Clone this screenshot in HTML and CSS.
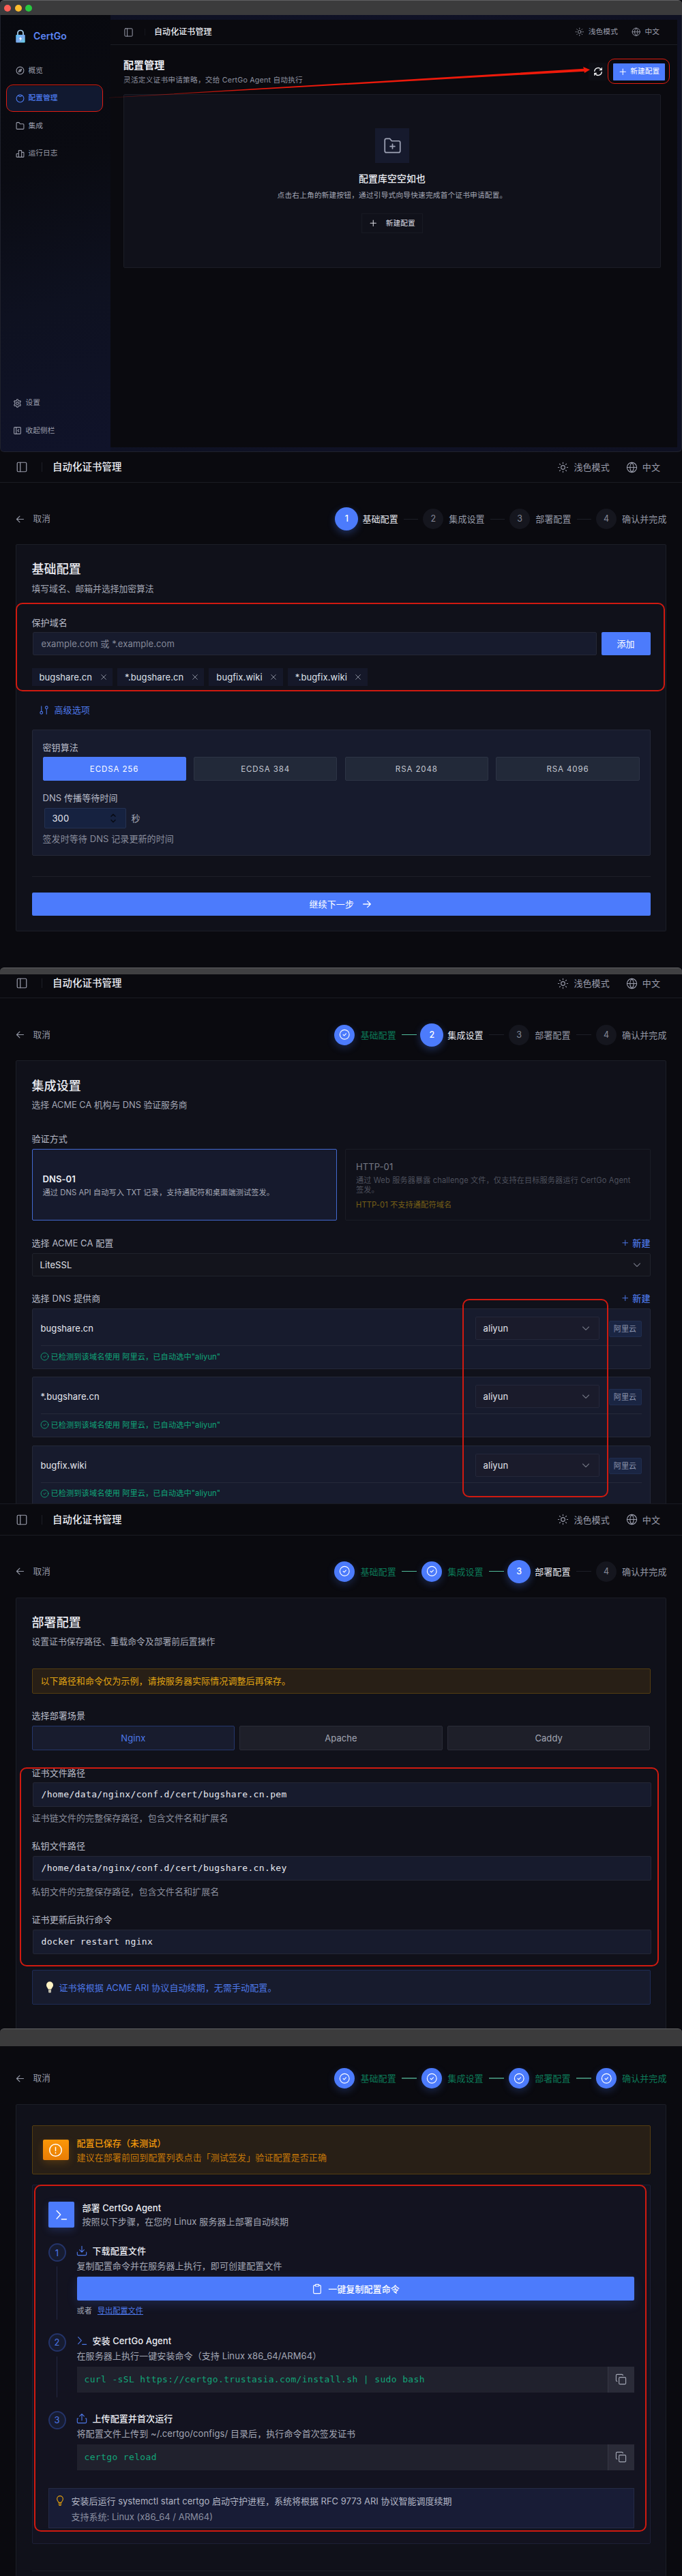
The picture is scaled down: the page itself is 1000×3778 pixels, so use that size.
FILE: index.html
```html
<!DOCTYPE html>
<html lang="zh-CN">
<head>
<meta charset="utf-8">
<title>CertGo 自动化证书管理</title>
<link rel="stylesheet" href="styles.css">
</head>
<body>
<svg class="defs" aria-hidden="true">
  <symbol id="panel" viewBox="0 0 24 24"><rect x="3" y="3" width="18" height="18" rx="2"/><path d="M9 3v18"/></symbol>
  <symbol id="collapse" viewBox="0 0 24 24"><rect x="3" y="3" width="18" height="18" rx="2"/><path d="M9 3v18M16 9l-3 3 3 3"/></symbol>
  <symbol id="sun" viewBox="0 0 24 24"><circle cx="12" cy="12" r="4"/><path d="M12 2v2M12 20v2M4.9 4.9l1.4 1.4M17.7 17.7l1.4 1.4M2 12h2M20 12h2M6.3 17.7l-1.4 1.4M19.1 4.9l-1.4 1.4"/></symbol>
  <symbol id="globe" viewBox="0 0 24 24"><circle cx="12" cy="12" r="10"/><path d="M2 12h20M12 2c-5.3 5.6-5.3 14.400 0 20M12 2c5.300 5.600 5.300 14.400 0 20"/></symbol>
  <symbol id="gauge" viewBox="0 0 24 24"><circle cx="12" cy="12" r="10"/><path d="M16 8l-2 6-6 2 2-6z"/><circle cx="12" cy="12" r="1"/></symbol>
  <symbol id="ring" viewBox="0 0 24 24"><circle cx="12" cy="12" r="10"/><path d="M6.500 4.500c3 2.500 8 2.500 11 0"/></symbol>
  <symbol id="folder" viewBox="0 0 24 24"><path d="M2 5a2 2 0 0 1 2-2h5l3 4h8a2 2 0 0 1 2 2v10a2 2 0 0 1-2 2H4a2 2 0 0 1-2-2z"/></symbol>
  <symbol id="folderplus" viewBox="0 0 24 24"><path d="M2 5a2 2 0 0 1 2-2h4.500l2.500 3h9a2 2 0 0 1 2 2v11a2 2 0 0 1-2 2H4a2 2 0 0 1-2-2zM12 10v6M9 13h6"/></symbol>
  <symbol id="bars" viewBox="0 0 24 24"><path d="M2 13a1 1 0 0 1 1-1h5v9H3a1 1 0 0 1-1-1zM8 4a1 1 0 0 1 1-1h6a1 1 0 0 1 1 1v17H8zM16 8h5a1 1 0 0 1 1 1v11a1 1 0 0 1-1 1h-5z"/></symbol>
  <symbol id="gear" viewBox="0 0 24 24"><path d="M9.700 4.300 10.500 1.500h3l.8 2.800 2.300 1.300 2.800-.7 1.600 2.600-2 2.100v4.800l2 2.100-1.600 2.600-2.800-.7-2.300 1.300-.8 2.800h-3l-.8-2.800-2.300-1.300-2.800.7L3 16.500l2-2.100V9.600L3 7.500l1.600-2.600 2.800.7z"/><circle cx="12" cy="12" r="3.500"/></symbol>
  <symbol id="refresh" viewBox="0 0 24 24"><path d="M3 11a9 9 0 0 1 15.500-5.500L21 8M21 3v5h-5M21 13a9 9 0 0 1-15.500 5.500L3 16M3 21v-5h5"/></symbol>
  <symbol id="plus" viewBox="0 0 24 24"><path d="M12 4v16M4 12h16"/></symbol>
  <symbol id="left" viewBox="0 0 24 24"><path d="M20 12H4M11 5l-7 7 7 7"/></symbol>
  <symbol id="right" viewBox="0 0 24 24"><path d="M4 12h16M13 5l7 7-7 7"/></symbol>
  <symbol id="cross" viewBox="0 0 24 24"><path d="M4 4l16 16M20 4L4 20"/></symbol>
  <symbol id="down" viewBox="0 0 24 24"><path d="M3 8l9 9 9-9"/></symbol>
  <symbol id="check" viewBox="0 0 24 24"><circle cx="12" cy="12" r="10"/><path d="M9 12.300l2.200 2 4-4.300"/></symbol>
  <symbol id="sliders" viewBox="0 0 24 24"><path d="M6 3v11M18 21V10"/><circle cx="6" cy="18" r="3"/><circle cx="18" cy="6" r="3"/></symbol>
  <symbol id="alert" viewBox="0 0 24 24"><circle cx="12" cy="12" r="10"/><path d="M12 7v6M12 16v1"/></symbol>
  <symbol id="prompt" viewBox="0 0 24 24"><path d="M4 4l7 7.500L4 19M13 20h9"/></symbol>
  <symbol id="download" viewBox="0 0 24 24"><path d="M12 2v13M7 10l5 5 5-5M2 15v5a2 2 0 0 0 2 2h16a2 2 0 0 0 2-2v-5"/></symbol>
  <symbol id="upload" viewBox="0 0 24 24"><path d="M12 16V2M7 7l5-5 5 5M4 12H2v8a2 2 0 0 0 2 2h16a2 2 0 0 0 2-2v-8h-2"/></symbol>
  <symbol id="clip" viewBox="0 0 24 24"><path d="M8 4H6a2 2 0 0 0-2 2v14a2 2 0 0 0 2 2h12a2 2 0 0 0 2-2V6a2 2 0 0 0-2-2h-2"/><rect x="8" y="2" width="8" height="4" rx="1"/></symbol>
  <symbol id="copy" viewBox="0 0 24 24"><rect x="8" y="8" width="14" height="14" rx="2"/><path d="M4 16a2 2 0 0 1-2-2V4a2 2 0 0 1 2-2h10a2 2 0 0 1 2 2"/></symbol>
  <symbol id="bulb" viewBox="0 0 24 24"><path d="M9 17c0-2-3.500-3.500-3.500-8a6.500 6.500 0 0 1 13 0c0 4.500-3.500 6-3.500 8zM9 20h6M10 23h4"/></symbol>
</svg>

<section class="window">
  <div class="titlebar lights"><i class="dot red"></i><i class="dot yellow"></i><i class="dot green"></i></div>
  <div class="shell">
    <nav class="sidebar">
      <div class="brand">
        <svg class="lock" viewBox="0 0 14 20"><defs><linearGradient id="lk" x1="0" y1="0" x2="1" y2="1"><stop offset="0" stop-color="#58c4f4"/><stop offset=".5" stop-color="#7fa8ee"/><stop offset="1" stop-color="#64d6e6"/></linearGradient></defs><path d="M3 9V5.500a4 4 0 0 1 8 0V9" fill="none" stroke="#a9d3f2" stroke-width="1.700"/><rect x=".3" y="8" width="13.400" height="11.500" rx="1" fill="url(#lk)"/><path d="M7.700 10.500 4.800 14.200h1.900L6.200 17.200 9.300 13.300H7.400z" fill="#fff"/></svg>
        <span>CertGo</span>
      </div>
      <a class="nav"><svg class="i"><use href="#gauge"/></svg>概览</a>
      <a class="nav on"><svg class="i"><use href="#ring"/></svg>配置管理</a>
      <a class="nav"><svg class="i"><use href="#folder"/></svg>集成</a>
      <a class="nav"><svg class="i"><use href="#bars"/></svg>运行日志</a>
      <div class="navfoot">
        <a class="nav"><svg class="i"><use href="#gear"/></svg>设置</a>
        <a class="nav"><svg class="i"><use href="#collapse"/></svg>收起侧栏</a>
      </div>
    </nav>
    <main class="main">
      <header class="bar small">
        <svg class="i"><use href="#panel"/></svg><i class="sep"></i><b>自动化证书管理</b>
        <span class="tool"><svg class="i"><use href="#sun"/></svg>浅色模式</span>
        <span class="tool"><svg class="i"><use href="#globe"/></svg>中文</span>
      </header>
      <div class="pagehead">
        <div><h1>配置管理</h1><p>灵活定义证书申请策略，交给 CertGo Agent 自动执行</p></div>
        <button class="refresh"><svg class="i"><use href="#refresh"/></svg></button>
        <button class="new"><svg class="i"><use href="#plus"/></svg>新建配置</button>
      </div>
      <div class="empty">
        <div class="tile"><svg class="i"><use href="#folderplus"/></svg></div>
        <h2>配置库空空如也</h2>
        <p>点击右上角的新建按钮，通过引导式向导快速完成首个证书申请配置。</p>
        <button><svg class="i"><use href="#plus"/></svg>新建配置</button>
      </div>
    </main>
  </div>
  <div class="mark mark-nav"></div>
  <div class="mark mark-new"></div>
  <svg class="arrow" viewBox="0 0 706 50"><defs><linearGradient id="ar"><stop offset="0" stop-color="#e8190c" stop-opacity=".25"/><stop offset=".3" stop-color="#e8190c"/><stop offset="1" stop-color="#f01a0a"/></linearGradient></defs><path d="M0 43 696 .8 695-2 705 2.300 697 7 696.500 4.700 0 43.600z" transform="translate(0 1)" fill="url(#ar)"/></svg>
</section>

<section class="wizard w2">
  <header class="bar">
    <svg class="i"><use href="#panel"/></svg><i class="sep"></i><b>自动化证书管理</b>
    <span class="tool"><svg class="i"><use href="#sun"/></svg>浅色模式</span>
    <span class="tool"><svg class="i"><use href="#globe"/></svg>中文</span>
  </header>
  <div class="steps">
    <span class="back"><svg class="i"><use href="#left"/></svg>取消</span>
    <span class="n cur">1</span><span class="s cur">基础配置</span><i></i>
    <span class="n">2</span><span class="s">集成设置</span><i></i>
    <span class="n">3</span><span class="s">部署配置</span><i></i>
    <span class="n">4</span><span class="s">确认并完成</span>
  </div>
  <div class="card">
    <h2>基础配置</h2>
    <p class="sub">填写域名、邮箱并选择加密算法</p>
    <div class="label l1">保护域名</div>
    <div class="addrow"><div class="field ph">example.com 或 *.example.com</div><button class="primary">添加</button></div>
    <div class="chips">
      <span>bugshare.cn<svg class="i"><use href="#cross"/></svg></span><span>*.bugshare.cn<svg class="i"><use href="#cross"/></svg></span><span>bugfix.wiki<svg class="i"><use href="#cross"/></svg></span><span>*.bugfix.wiki<svg class="i"><use href="#cross"/></svg></span>
    </div>
    <div class="adv"><svg class="i"><use href="#sliders"/></svg>高级选项</div>
    <div class="panel">
      <div class="label">密钥算法</div>
      <div class="algos"><button class="on">ECDSA 256</button><button>ECDSA 384</button><button>RSA 2048</button><button>RSA 4096</button></div>
      <div class="label l2">DNS 传播等待时间</div>
      <div class="wait"><div class="num">300<span><svg class="i up"><use href="#down"/></svg><svg class="i"><use href="#down"/></svg></span></div>秒</div>
      <div class="hint">签发时等待 DNS 记录更新的时间</div>
    </div>
    <hr>
    <button class="primary next">继续下一步<svg class="i"><use href="#right"/></svg></button>
  </div>
  <div class="mark mark-domain"></div>
</section>

<section class="wizard w3">
  <div class="titlebar thin"></div>
  <header class="bar">
    <svg class="i"><use href="#panel"/></svg><i class="sep"></i><b>自动化证书管理</b>
    <span class="tool"><svg class="i"><use href="#sun"/></svg>浅色模式</span>
    <span class="tool"><svg class="i"><use href="#globe"/></svg>中文</span>
  </header>
  <div class="steps">
    <span class="back"><svg class="i"><use href="#left"/></svg>取消</span>
    <span class="n done"><svg class="i"><use href="#check"/></svg></span><span class="s done">基础配置</span><i class="done"></i>
    <span class="n cur">2</span><span class="s cur">集成设置</span><i></i>
    <span class="n">3</span><span class="s">部署配置</span><i></i>
    <span class="n">4</span><span class="s">确认并完成</span>
  </div>
  <div class="card">
    <h2>集成设置</h2>
    <p class="sub">选择 ACME CA 机构与 DNS 验证服务商</p>
    <div class="label l1">验证方式</div>
    <div class="methods">
      <div class="method on"><b>DNS-01</b><p>通过 DNS API 自动写入 TXT 记录，支持通配符和桌面端测试签发。</p></div>
      <div class="method off"><b>HTTP-01</b><p>通过 Web 服务器暴露 challenge 文件，仅支持在目标服务器运行 CertGo Agent<br>签发。</p><em>HTTP-01 不支持通配符域名</em></div>
    </div>
    <div class="label split l2">选择 ACME CA 配置<a><svg class="i"><use href="#plus"/></svg>新建</a></div>
    <div class="select wide">LiteSSL<svg class="i"><use href="#down"/></svg></div>
    <div class="label split l3">选择 DNS 提供商<a><svg class="i"><use href="#plus"/></svg>新建</a></div>
    <div class="providers">
      <div class="prov"><div class="line"><span>bugshare.cn</span><div class="select">aliyun<svg class="i"><use href="#down"/></svg></div><span class="tag">阿里云</span></div><div class="ok"><svg class="i"><use href="#check"/></svg>已检测到该域名使用 阿里云，已自动选中"aliyun"</div></div>
      <div class="prov"><div class="line"><span>*.bugshare.cn</span><div class="select">aliyun<svg class="i"><use href="#down"/></svg></div><span class="tag">阿里云</span></div><div class="ok"><svg class="i"><use href="#check"/></svg>已检测到该域名使用 阿里云，已自动选中"aliyun"</div></div>
      <div class="prov"><div class="line"><span>bugfix.wiki</span><div class="select">aliyun<svg class="i"><use href="#down"/></svg></div><span class="tag">阿里云</span></div><div class="ok"><svg class="i"><use href="#check"/></svg>已检测到该域名使用 阿里云，已自动选中"aliyun"</div></div>
    </div>
  </div>
  <div class="mark mark-prov"></div>
</section>

<section class="wizard w4">
  <header class="bar">
    <svg class="i"><use href="#panel"/></svg><i class="sep"></i><b>自动化证书管理</b>
    <span class="tool"><svg class="i"><use href="#sun"/></svg>浅色模式</span>
    <span class="tool"><svg class="i"><use href="#globe"/></svg>中文</span>
  </header>
  <div class="steps">
    <span class="back"><svg class="i"><use href="#left"/></svg>取消</span>
    <span class="n done"><svg class="i"><use href="#check"/></svg></span><span class="s done">基础配置</span><i class="done"></i>
    <span class="n done"><svg class="i"><use href="#check"/></svg></span><span class="s done">集成设置</span><i class="done"></i>
    <span class="n cur">3</span><span class="s cur">部署配置</span><i></i>
    <span class="n">4</span><span class="s">确认并完成</span>
  </div>
  <div class="card">
    <h2>部署配置</h2>
    <p class="sub">设置证书保存路径、重载命令及部署前后置操作</p>
    <div class="warn">以下路径和命令仅为示例，请按服务器实际情况调整后再保存。</div>
    <div class="label l1">选择部署场景</div>
    <div class="tabs"><button class="on">Nginx</button><button>Apache</button><button>Caddy</button></div>
    <div class="label l2">证书文件路径</div>
    <div class="field mono">/home/data/nginx/conf.d/cert/bugshare.cn.pem</div>
    <div class="hint">证书链文件的完整保存路径，包含文件名和扩展名</div>
    <div class="label l3">私钥文件路径</div>
    <div class="field mono">/home/data/nginx/conf.d/cert/bugshare.cn.key</div>
    <div class="hint">私钥文件的完整保存路径，包含文件名和扩展名</div>
    <div class="label l3">证书更新后执行命令</div>
    <div class="field mono">docker restart nginx</div>
    <div class="info"><svg class="emoji" viewBox="0 0 12 17"><path d="M3.500 11.500C3.500 9.500 1 8.500 1 5.200a5 5 0 0 1 10 0c0 3.300-2.500 4.300-2.500 6.300z" fill="#fff3c4"/><path d="M4 12h4v3.500a2 1.300 0 0 1-4 0z" fill="#b9b6a5"/></svg>证书将根据 ACME ARI 协议自动续期，无需手动配置。</div>
  </div>
  <div class="mark mark-paths"></div>
</section>

<section class="wizard w5">
  <div class="titlebar thick"></div>
  <div class="steps">
    <span class="back"><svg class="i"><use href="#left"/></svg>取消</span>
    <span class="n done"><svg class="i"><use href="#check"/></svg></span><span class="s done">基础配置</span><i class="done"></i>
    <span class="n done"><svg class="i"><use href="#check"/></svg></span><span class="s done">集成设置</span><i class="done"></i>
    <span class="n done"><svg class="i"><use href="#check"/></svg></span><span class="s done">部署配置</span><i class="done"></i>
    <span class="n done"><svg class="i"><use href="#check"/></svg></span><span class="s done">确认并完成</span>
  </div>
  <div class="card">
    <div class="saved"><div class="sq"><svg class="i"><use href="#alert"/></svg></div><div><b>配置已保存（未测试）</b><p>建议在部署前回到配置列表点击「测试签发」验证配置是否正确</p></div></div>
    <div class="deploy">
      <div class="dhead"><div class="sq"><svg class="i"><use href="#prompt"/></svg></div><div><b>部署 CertGo Agent</b><p>按照以下步骤，在您的 Linux 服务器上部署自动续期</p></div></div>
      <div class="dstep a"><div class="rail"><span>1</span><i></i></div><div class="body">
        <h3><svg class="i"><use href="#download"/></svg>下载配置文件</h3><p>复制配置命令并在服务器上执行，即可创建配置文件</p>
        <button class="primary"><svg class="i"><use href="#clip"/></svg>一键复制配置命令</button>
        <div class="or">或者<a>导出配置文件</a></div></div></div>
      <div class="dstep b"><div class="rail"><span>2</span><i></i></div><div class="body">
        <h3><svg class="i"><use href="#prompt"/></svg>安装 CertGo Agent</h3><p>在服务器上执行一键安装命令（支持 Linux x86_64/ARM64）</p>
        <div class="code"><code>curl -sSL https://certgo.trustasia.com/install.sh | sudo bash</code><span><svg class="i"><use href="#copy"/></svg></span></div></div></div>
      <div class="dstep c"><div class="rail"><span>3</span></div><div class="body">
        <h3><svg class="i"><use href="#upload"/></svg>上传配置并首次运行</h3><p>将配置文件上传到 ~/.certgo/configs/ 目录后，执行命令首次签发证书</p>
        <div class="code"><code>certgo reload</code><span><svg class="i"><use href="#copy"/></svg></span></div></div></div>
      <div class="tip"><svg class="i"><use href="#bulb"/></svg><div><p>安装后运行 systemctl start certgo 启动守护进程，系统将根据 RFC 9773 ARI 协议智能调度续期</p><p class="dim">支持系统: Linux (x86_64 / ARM64)</p></div></div>
    </div>
    <hr>
  </div>
  <div class="mark mark-deploy"></div>
</section>
</body>
</html>
```
FILE: styles.css
```css
* { box-sizing: border-box; margin: 0; padding: 0; }
body { width: 1000px; background: #0a0a0f; color: #a3a7b5; font: 13px/20px Inter, "Noto Sans CJK SC", sans-serif; letter-spacing: .09px; }
section { position: relative; overflow: hidden; }
button { font: inherit; letter-spacing: inherit; color: inherit; border: 0; background: none; display: flex; align-items: center; justify-content: center; }
i, em { font-style: normal; }
b, h1, h2, h3 { font-weight: 500; color: #eceef4; }
p, .label, .hint { white-space: nowrap; }
.defs { display: none; }
.i { fill: none; stroke: currentColor; stroke-width: 1.7; stroke-linecap: round; stroke-linejoin: round; flex: none; width: 14px; height: 14px; overflow: visible; }
.mark { position: absolute; border: 2px solid #d01a10; border-radius: 10px; }

/* title bars */
.titlebar { background: #3b3b3c; border-top: 1px solid #606062; border-radius: 6px 6px 0 0; }
.lights { height: 22px; display: flex; align-items: center; gap: 5.600px; padding-left: 6px; }
.dot { width: 10px; height: 10px; border-radius: 50%; }
.red { background: #ff5f57; } .yellow { background: #febc2e; } .green { background: #28c840; }
.thin { height: 10px; background: #404042; }
.thick { height: 26px; }

/* first window */
.window { height: 663px; font-size: 10.700px; background: #0a0a0f; }
.shell { height: 641px; display: flex; border: 1px solid #20222d; border-top: 0; border-radius: 0 0 6px 6px; background: linear-gradient(90deg, #0e1122 0, #101226 60%, #0f1122 100%); overflow: hidden; }
.sidebar { width: 161px; display: flex; flex-direction: column; background: linear-gradient(165deg, #08090f 0, #0a0b12 35%, #0e1120 65%, #10132a 100%); }
.brand { height: 61px; display: flex; align-items: center; gap: 12px; padding-left: 22px; color: #5c86f6; font-size: 14px; font-weight: 600; }
.lock { width: 14px; height: 20px; }
.nav { height: 37px; margin: 0 12px 3.600px 9px; padding-left: 12.500px; display: flex; align-items: center; gap: 6px; color: #9a9dab; }
.brand + .nav { margin-top: 2px; }
.nav .i { width: 13px; height: 13px; stroke-width: 2; }
.nav.on { background: #111930; color: #4d7cf0; font-weight: 500; border-radius: 8px; }
.navfoot { margin-top: auto; padding-bottom: 8px; }
.navfoot .nav { margin-left: 6px; padding-left: 11.500px; }
.main { width: 831px; height: 627px; margin-top: 7px; background: #0a0a0f; }
.bar { display: flex; align-items: center; border-bottom: 1px solid #1b1c23; height: 45px; padding: 0 32px 0 23px; color: #9a9dac; }
.bar > .i { width: 18px; height: 18px; stroke-width: 1.600; }
.bar b { font-size: 14.400px; margin-left: 15px; margin-right: auto; }
.sep { width: 1px; height: 14px; background: #1d1e26; margin-left: 20px; }
.tool { display: flex; align-items: center; gap: 7px; margin-left: 24px; }
.tool .i { width: 17px; height: 17px; stroke-width: 1.600; }
.bar.small { height: 37px; padding: 0 26px 0 19px; }
.small > .i { width: 15px; height: 15px; }
.small .sep { margin-left: 16px; height: 10px; background: #15161d; }
.small b { font-size: 12px; margin-left: 13px; }
.small .tool { gap: 6px; margin-left: 20px; }
.small .tool .i { width: 13.500px; height: 13.500px; }
.pagehead { display: flex; height: 72px; padding: 20px 18px 0 19px; align-items: flex-start; }
.pagehead > div { flex: 1; }
.pagehead h1 { font-size: 15px; line-height: 20px; font-weight: 600; }
.pagehead p { line-height: 20px; margin-top: 2px; color: #8f93a1; letter-spacing: .2px; }
.refresh { width: 27px; height: 26px; margin: 6px 9px 0 0; background: #0d0e14; border-radius: 2px; }
.refresh .i { color: #f3f4f6; width: 14px; height: 14px; stroke-width: 2.200; }
.new { width: 76px; height: 25px; margin-top: 6.500px; background: #4c7bfc; color: #fff; gap: 5px; border-radius: 1px; }
.new .i, .empty button .i { width: 12.500px; height: 12.500px; stroke-width: 2; }
.empty { width: 788px; height: 255px; margin-left: 19px; background: #10111a; border: 1px solid #1b1d26; display: flex; flex-direction: column; align-items: center; padding-top: 49px; border-radius: 2px; }
.tile { width: 50px; height: 51px; background: #161a2d; display: flex; align-items: center; justify-content: center; color: #a0a5b8; }
.tile .i { width: 27px; height: 27px; stroke-width: 1.500; }
.empty h2 { font-size: 13.900px; margin-top: 13px; font-weight: 500; }
.empty p { margin-top: 5px; letter-spacing: .18px; }
.empty button { width: 90px; height: 29px; margin-top: 16px; border: 1px solid #181a23; gap: 12px; color: #dcdde4; }
.mark-nav { left: 9px; top: 124px; width: 142px; height: 40px; border-width: 1px; border-color: #e01c10; }
.mark-new { left: 891px; top: 86px; width: 91px; height: 37px; border-width: 1px; border-color: #e01c10; }
.arrow { position: absolute; left: 160px; top: 99px; width: 706px; height: 50px; overflow: visible; }

/* wizard frame */
.steps { height: 34px; display: flex; align-items: center; padding: 0 22.500px 0 22px; color: #9498a6; }
.back { display: flex; align-items: center; gap: 11.500px; margin-right: auto; font-size: 12.600px; }
.back .i { width: 15px; height: 15px; stroke-width: 1.900; }
.n { width: 30px; height: 30px; border-radius: 50%; background: #15161e; display: flex; align-items: center; justify-content: center; margin-right: 8px; color: #858998; font-size: 12.500px; }
.n.cur { background: #4c7bfc; color: #fff; width: 34px; height: 34px; margin: 0 6px 0 -2px; font-weight: 500; box-shadow: 0 4px 12px #4c7bfc55; }
.n.done { background: #4c7bfc; color: #fff; box-shadow: 0 4px 12px #4c7bfc40; }
.n.done .i { width: 16.500px; height: 16.500px; stroke-width: 1.700; }
.s { white-space: nowrap; }
.s.cur { color: #e6e8ef; } .s.done { color: #0c7a58; }
.steps > i { width: 22px; height: 1px; background: #1d1f27; margin: 0 7.500px 0 8px; }
.steps > i.done { background: #52bd9c; }
.w5 .steps > i.done { height: 2px; background: #3d7f6b; }
.card { margin: 20px 23px 0; border: 1px solid #1c1e27; background: #10111a; padding: 23px 22.500px 0; border-radius: 2px; }
.card > h2 { font-size: 18px; line-height: 26px; font-weight: 500; }
.sub { margin-top: 5px; font-size: 12.800px; letter-spacing: 0; }
.label { height: 20px; color: #b9bcc9; }
.hint { margin-top: 6px; height: 20px; color: #8a8e9d; }
.l1 { margin-top: 29px; }
.primary { background: #4c7bfc; color: #fff; border-radius: 2px; }
hr { border: 0; height: 1px; background: #1d1f28; }
.field { height: 34px; background: #171b2d; border: 1px solid #242736; padding-left: 12px; display: flex; align-items: center; border-radius: 2px; }
.ph { flex: 1; color: #858999; }

/* basic settings */
.w2 { height: 756px; }
.w2 .steps { margin-top: 36px; }
.w2 .steps > i { width: 21.500px; margin-right: 7px; }
.w2 .card { height: 568px; }
.w2 .sub { margin-top: 6px; }
.addrow { display: flex; gap: 7px; margin: 4px 0 0 1px; }
.addrow .primary { width: 72px; }
.chips { display: flex; gap: 7px; margin-top: 19px; }
.chips span { height: 26px; padding: 0 8.500px 0 11px; background: #151829; display: flex; align-items: center; gap: 11.500px; color: #dfe1ea; }
.chips .i { width: 10px; height: 10px; stroke-width: 2.300; color: #8c90a0; }
.adv { margin-top: 25px; padding-left: 10px; display: flex; align-items: center; gap: 8px; color: #4d78e8; }
.adv .i { width: 15px; height: 15px; }
.w2 .panel { margin-top: 19px; height: 185px; border: 1px solid #242838; background: #171b2d; padding: 15px 15px 0; border-radius: 2px; }
.algos { display: grid; grid-template-columns: repeat(4, 1fr); gap: 11.500px; margin-top: 4px; height: 35px; }
.algos button { background: #222939; border: 1px solid #2d3445; font-size: 11.500px; letter-spacing: .9px; color: #c6c9d3; border-radius: 2px; }
.algos .on { background: #4c7bfc; border-color: #4c7bfc; color: #fff; }
.panel .l2 { margin-top: 15px; }
.wait { display: flex; align-items: center; gap: 8px; margin: 5px 0 0 2px; height: 30px; }
.num { width: 120px; height: 30px; background: #162240; border: 1px solid #243150; display: flex; align-items: center; justify-content: space-between; padding: 0 13px 0 11px; color: #e6e8ef; border-radius: 2px; }
.num span { display: flex; flex-direction: column; gap: 0; color: #080b14; }
.num .i { width: 10px; height: 8px; stroke-width: 4.500; }
.num .up { transform: rotate(180deg); }
.w2 .hint { margin-top: 5px; }
.w2 hr { margin-top: 30px; }
.next { width: 100%; height: 34px; margin-top: 23px; gap: 11.500px; }
.next .i { width: 16px; height: 16px; stroke-width: 1.900; }
.mark-domain { left: 23px; top: 221px; width: 952px; height: 130px; }

/* integrations */
.w3 { height: 786px; }
.w3 .bar { height: 35px; padding-bottom: 8px; }
.w3 .steps { margin-top: 36.500px; }
.w3 .card { margin-top: 20.500px; height: 700px; padding-top: 24px; }
.methods { display: grid; grid-template-columns: 1fr 1fr; gap: 12px; margin-top: 5px; height: 105px; }
.method { border: 1px solid #1a1c25; padding: 0 15px; display: flex; flex-direction: column; justify-content: center; font-size: 11.200px; line-height: 14px; border-radius: 2px; }
.method b { font-size: 13px; line-height: 20px; }
.method p { margin-top: 3px; }
.method.on { background: #161a2d; border-color: #4369cf; }
.method.on b { font-weight: 600; }
.off b { color: #767a86; font-weight: 400; }
.off p { color: #4d505c; }
.off em { color: #786016; margin-top: 8px; }
.w3 .l2 { margin-top: 23px; }
.w3 .l3 { margin-top: 22px; }
.split { display: flex; justify-content: space-between; }
.split a { display: flex; align-items: center; gap: 5px; color: #4d78e8; font-weight: 500; }
.split .i { width: 11.500px; height: 11.500px; stroke-width: 2; }
.select { height: 34px; width: 182px; background: #1a1b2b; border: 1px solid #24273a; padding: 0 13px 0 11px; display: flex; align-items: center; justify-content: space-between; color: #e2e4eb; border-radius: 2px; }
.select .i { width: 12px; height: 12px; stroke-width: 2.200; color: #6d707d; }
.select.wide { width: 100%; margin-top: 5px; background: #13141c; border-color: #20222b; }
.providers { margin-top: 5px; display: flex; flex-direction: column; gap: 11.400px; }
.prov { height: 89px; background: #171b2d; border: 1px solid #242838; padding: 11px 12px 0; border-radius: 2px; }
.line { height: 43px; border-bottom: 1px solid #252939; display: flex; align-items: flex-start; color: #e6e8ef; line-height: 34px; }
.line > span:first-child { margin-right: auto; }
.tag { margin: 6px 0 0 14px; width: 48px; height: 24px; line-height: 22px; text-align: center; font-size: 11.100px; background: #1a2543; border: 1px solid #202d4e; color: #8b93ab; border-radius: 2px; }
.ok { display: flex; align-items: center; gap: 3px; margin: 5.500px 0 0 -1px; color: #10a679; font-size: 11.200px; }
.ok .i { width: 13px; height: 13px; }
.mark-prov { left: 678px; top: 486px; width: 214px; height: 291px; }

/* deployment */
.w4 { height: 770px; border-top: 1px solid #191a22; }
.w4 .bar { height: 46px; }
.w4 .steps { margin-top: 35.500px; }
.w4 .card { margin-top: 21.500px; height: 700px; }
.warn { height: 37px; margin-top: 29px; background: #281f16; border: 1px solid #543d10; color: #e0a412; padding-left: 12px; line-height: 35px; border-radius: 2px; }
.w4 .l1 { margin-top: 22px; }
.tabs { display: grid; grid-template-columns: 1fr 1fr 1fr; gap: 7px; height: 36px; margin-top: 5px; }
.tabs button { background: #1e1f29; border: 1px solid #2a2c37; border-radius: 2px; }
.tabs .on { background: #181c2e; border-color: #25376c; color: #4d78e8; }
.w4 .l2 { margin-top: 23px; }
.w4 .l3 { margin-top: 21px; }
.mono { height: 36px; margin: 5px -1.500px 0 1px; color: #e6e8ef; font: 13px/20px "DejaVu Sans Mono", monospace; letter-spacing: .36px; }
.l2 + .mono { margin-top: 4px; }
.info { height: 51px; margin-top: 23px; background: #171b2d; border: 1px solid #1e2b54; color: #4d78e8; display: flex; align-items: center; gap: 8px; padding-left: 19px; border-radius: 2px; }
.emoji { width: 12px; height: 17px; }
.mark-paths { left: 29px; top: 386px; width: 937px; height: 292px; }

/* finish */
.w5 { height: 803px; }
.w5 .steps { margin-top: 30px; }
.w5 .card { margin-top: 21px; height: 720px; padding-top: 30px; }
.saved { height: 72px; background: #281f16; border: 1px solid #543d10; display: flex; align-items: center; gap: 12px; padding-left: 15px; color: #c67808; border-radius: 2px; }
.saved b { color: #f49a0b; display: block; height: 21px; }
.sq { width: 38px; height: 38px; background: #4c7bfc; color: #fff; display: flex; align-items: center; justify-content: center; border-radius: 2px; box-shadow: 0 4px 12px #4c7bfc38; }
.sq .i { width: 19px; height: 19px; stroke-width: 1.800; }
.saved .sq { height: 30px; background: linear-gradient(#fb9708, #e87d05); box-shadow: 0 4px 12px #f9970633; }
.saved .sq .i { width: 21px; height: 21px; stroke-width: 1.700; }
.deploy { margin-top: 15px; height: 527px; border: 1px solid #1d2036; background: #131320; padding: 24px 23px 0; border-radius: 2px; }
.dhead { display: flex; gap: 12px; height: 38px; }
.dhead b { display: block; margin-top: -1px; }
.dstep { display: flex; gap: 16px; }
.dstep.a { height: 131.500px; margin-top: 23px; } .dstep.b { height: 114px; } .dstep.c { height: 113.500px; }
.rail { width: 26px; display: flex; flex-direction: column; align-items: center; gap: 7px; }
.rail span { width: 26px; height: 27px; border: 2px solid #24346a; border-radius: 50%; background: #171c31; color: #4d78e8; display: flex; align-items: center; justify-content: center; }
.rail i { width: 1px; height: 78px; background: #232743; }
.b .rail i { height: 60px; }
.body { flex: 1; }
.body h3 { font-size: 13px; line-height: 20px; display: flex; align-items: center; gap: 7.500px; margin-top: 1px; }
.body h3 .i { color: #4d78e8; width: 16px; height: 16px; margin-left: -.5px; }
.body p { margin-top: 2px; }
.body .primary { width: 100%; height: 35px; margin-top: 6px; gap: 7px; font-weight: 500; box-shadow: 0 5px 16px #4c7bfc30; }
.body .primary .i { width: 18px; height: 16px; }
.or { margin-top: 5px; font-size: 11.100px; display: flex; gap: 8px; }
.or a { color: #4d78e8; text-decoration: underline; }
.code { display: flex; height: 38px; margin-top: 6px; background: #20212d; }
.code code { flex: 1; padding-left: 11px; font: 13px/38px "DejaVu Sans Mono", monospace; letter-spacing: .36px; color: #12a678; }
.code span { width: 39px; background: #2a2b38; border-left: 1px solid #353744; display: flex; align-items: center; justify-content: center; }
.code .i { width: 17px; height: 17px; stroke-width: 1.600; }
.tip { height: 59px; background: #181c36; border: 1px solid #242a45; display: flex; gap: 9px; padding: 8px 0 0 8px; }
.tip .i { width: 16px; height: 16px; color: #e6a20c; margin-top: 1px; }
.tip p { color: #b2b6c5; letter-spacing: 0; }
.tip .dim { color: #8a8ea0; margin-top: 3px; }
.w5 hr { margin-top: 39px; }
.mark-deploy { left: 50px; top: 229px; width: 898px; height: 509px; }
```
